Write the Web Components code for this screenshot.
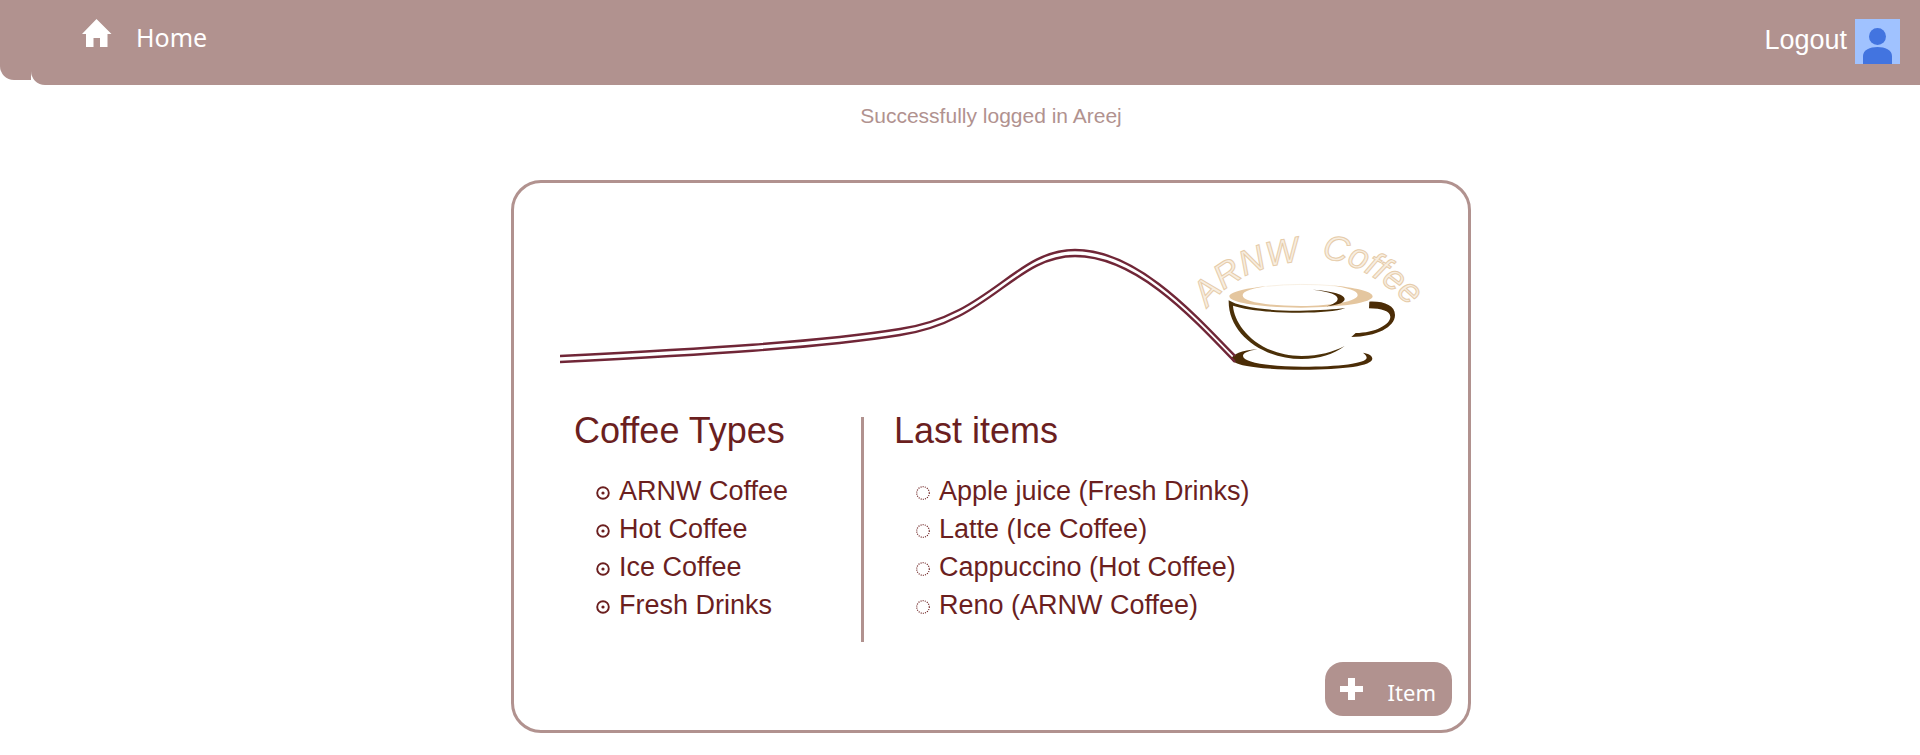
<!DOCTYPE html>
<html lang="en">
<head>
<meta charset="utf-8">
<title>ARNW Coffee</title>
<style>
  body { margin: 0; background: #fff; font-family: "Liberation Sans", Arial, sans-serif; color: #6b1f1f; overflow-x: hidden;
    --rose: #b1928f; --maroon: #6b1f1f; --ui: "Noto Sans", "Open Sans", sans-serif; }
</style>
</head>
<body>
<coffee-app></coffee-app>
<script>
const define = (name, html, init) => {
  const template = document.createElement('template');
  template.innerHTML = html;
  customElements.define(name, class extends HTMLElement {
    constructor() {
      super();
      this.attachShadow({ mode: 'open' }).append(template.content.cloneNode(true));
    }
    connectedCallback() { if (init) init(this, this.shadowRoot); }
  });
};

define('nav-bar', `
<style>
  :host { display: flex; align-items: flex-start; }
  .edge { flex: none; width: 31px; height: 80px; background: var(--rose); border-bottom-left-radius: 14px; }
  nav { flex: 1; box-sizing: border-box; height: 85px; padding: 0 20px 2px 50px; display: flex; align-items: center; justify-content: space-between;
    background: var(--rose); border-bottom-left-radius: 14px; }
  a { display: flex; align-items: center; color: #fff; text-decoration: none; }
  .home { gap: 24px; font: 25px/36px var(--ui); padding-bottom: 10px; }
  .home svg { margin-bottom: 6px; }
  .out { gap: 8px; font-size: 27px; line-height: 36px; }
  .out span { padding-bottom: 4px; }
  svg { display: block; }
</style>
<div class="edge"></div>
<nav>
  <a class="home" href="#home">
    <svg width="31" height="29" viewBox="0 0 31 29" aria-hidden="true"><path fill="#fff" d="M15.500 0L30.500 15H26.500V28H19V19H12.500V28H5V15H1Z"/></svg>
    <span>Home</span>
  </a>
  <a class="out" href="#logout">
    <span>Logout</span>
    <svg width="45" height="45" viewBox="0 0 45 45" aria-hidden="true"><path fill="#a0c2ff" d="M0 0H45V45H0Z"/><circle cx="22.500" cy="17.500" r="8.500" fill="#4274e0"/><path fill="#4274e0" d="M8 45V37C8 31 15 28 22.500 28S37 31 37 37V45Z"/></svg>
  </a>
</nav>`);

define('flash-message', `
<style>
  :host { display: block; padding-top: 18px; font-size: 21px; line-height: 26px; text-align: center; color: var(--rose); }
  p { margin: 0; }
</style>
<p role="status"><slot></slot></p>`);

define('coffee-logo', `
<style>
  :host { display: block; }
  svg { display: block; width: 100%; height: auto; }
  text { font: italic 35px "Liberation Sans", sans-serif; fill: #f8eee0; stroke: #e6ccaa; stroke-width: 1; }
</style>
<svg viewBox="560 220 880 160" role="img" aria-label="ARNW Coffee">
  <g transform="translate(1160 210) scale(.3333333)">
    <path fill="#e4c69f" fill-rule="evenodd" d="M340 224C260 230 208 243 208 256C208 274 290 289 423 290C550 289 638 275 638 256C638 242 585 229 510 223C565 231 593 240 593 252C593 271 520 284 423 285C320 284 248 273 248 253C248 240 280 230 340 224Z"/>
    <path fill="none" stroke="#f4e8d7" stroke-width="2" d="M320 226Q420 215 530 225"/>
    <path fill="#4b2c06" d="M458 236C520 240 554 251 554 264C554 274 536 282 500 286C524 278 533 271 533 263C533 252 510 242 458 236Z"/>
    <path fill="#4b3008" d="M206 268C235 287 320 300 420 299C480 298 525 295 556 291C530 301 480 305 420 305C330 305 260 297 219 284C222 340 290 434 425 435C480 434 518 423 554 405C520 430 480 443 425 444C310 444 204 370 206 268Z"/>
    <path fill="#4b2c06" d="M628 272C673 270 705 284 705 312C705 348 650 377 574 378L587 366C645 365 691 341 691 317C691 301 665 292 627 292Z"/>
    <path fill="#4b2c06" d="M292 415C245 418 215 431 215 444C215 464 305 476 428 476C552 476 637 464 637 443C637 434 627 428 609 425C617 431 620 436 620 440C620 457 535 467 428 467C325 467 249 454 249 435C249 427 262 420 292 415Z"/>
  </g>
  <g fill="none" stroke="#702637" stroke-width="2.400">
    <path d="M560 355C700 348 820 341 900 328C990 315 1015 249 1075 249C1135 249 1190 308 1235 355"/>
    <path d="M560 361C700 354 820 347 900 334C990 321 1015 255 1075 255C1135 255 1190 314 1235 361"/>
  </g>
  <path id="left" fill="none" d="M1208 307Q1240 262 1318 259"/>
  <path id="right" fill="none" d="M1321 257Q1375 264 1425 322"/>
  <text><textPath href="#left">ARNW</textPath></text>
  <text><textPath href="#right">Coffee</textPath></text>
</svg>`);

const bullets = {
  dot: '<svg width="14" height="14" viewBox="0 0 14 14" aria-hidden="true"><circle cx="7" cy="7" r="5.800" fill="none" stroke="#6b1f1f" stroke-width="1.900"/><circle cx="7" cy="7" r="1.600" fill="#6b1f1f"/></svg>',
  dotted: '<svg width="14" height="14" viewBox="0 0 14 14" aria-hidden="true"><circle cx="7" cy="7" r="6.300" fill="none" stroke="#6b1f1f" stroke-width="1.200" stroke-dasharray="1 1.200"/></svg>'
};

define('menu-item', `
<style>
  :host { display: flex; align-items: center; gap: 9px; font-size: 27px; line-height: 38px; white-space: nowrap; }
  svg { display: block; margin-top: 4px; }
</style>
<span class="bullet"></span><span><slot></slot></span>`,
(host, root) => { root.querySelector('.bullet').innerHTML = bullets[host.getAttribute('bullet')]; });

define('menu-section', `
<style>
  :host { display: block; }
  h2 { margin: 0; font-weight: 400; font-size: 36px; line-height: 28px; }
  .items { padding: 27px 0 0 22px; }
</style>
<section><h2><slot name="title"></slot></h2><div class="items" role="list"><slot></slot></div></section>`);

define('add-button', `
<style>
  :host { display: block; }
  button { display: flex; align-items: center; gap: 25px; height: 54px; padding: 0 16px 0 15px; border: 0; border-radius: 18px;
    background: var(--rose); color: #fff; font: 22px/32px var(--ui); cursor: pointer; }
  svg { display: block; }
  span { padding-top: 6px; }
</style>
<button type="button"><svg width="23" height="23" viewBox="0 0 23 23" aria-hidden="true"><path fill="#fff" d="M8 0H15V8H23V14H15V22H8V14H0V8H8Z"/></svg><span><slot></slot></span></button>`);

define('coffee-card', `
<style>
  :host { display: block; box-sizing: border-box; border: 3px solid var(--rose); border-radius: 30px; padding: 38px 16px 14px 46px; }
  .logo { padding-right: 12px; }
  .columns { display: grid; grid-template-columns: 290px 1fr; padding: 36px 0 0 14px; }
  .columns > :first-child { min-height: 225px; border-right: 3px solid var(--rose); }
  .columns > :last-child { padding-left: 30px; }
  footer { display: flex; justify-content: flex-end; padding-top: 20px; }
</style>
<div class="logo"><slot name="logo"></slot></div>
<div class="columns"><div><slot name="types"></slot></div><div><slot name="latest"></slot></div></div>
<footer><slot name="action"></slot></footer>`);

define('coffee-app', `
<style>
  :host { display: block; overflow: hidden; }
  /* The page body is a full window wide and starts after the header's left edge. */
  main { width: 100%; margin-left: 31px; }
  coffee-card { width: 50%; margin: 51px auto 0; }
</style>
<header><nav-bar></nav-bar></header>
<main>
  <flash-message>Successfully logged in Areej</flash-message>
  <coffee-card>
    <coffee-logo slot="logo"></coffee-logo>
    <menu-section slot="types">
      <span slot="title">Coffee Types</span>
      <menu-item role="listitem" bullet="dot">ARNW Coffee</menu-item>
      <menu-item role="listitem" bullet="dot">Hot Coffee</menu-item>
      <menu-item role="listitem" bullet="dot">Ice Coffee</menu-item>
      <menu-item role="listitem" bullet="dot">Fresh Drinks</menu-item>
    </menu-section>
    <menu-section slot="latest">
      <span slot="title">Last items</span>
      <menu-item role="listitem" bullet="dotted">Apple juice (Fresh Drinks)</menu-item>
      <menu-item role="listitem" bullet="dotted">Latte (Ice Coffee)</menu-item>
      <menu-item role="listitem" bullet="dotted">Cappuccino (Hot Coffee)</menu-item>
      <menu-item role="listitem" bullet="dotted">Reno (ARNW Coffee)</menu-item>
    </menu-section>
    <add-button slot="action">Item</add-button>
  </coffee-card>
</main>`);
</script>
</body>
</html>
